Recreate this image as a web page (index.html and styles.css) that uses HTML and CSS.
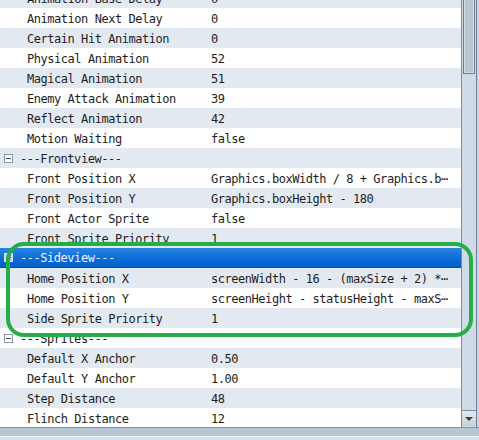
FILE: index.html
```html
<!DOCTYPE html>
<html lang="en">
<head>
  <meta charset="UTF-8" />
  <title>Plugin Parameters</title>
  <link rel="stylesheet" href="styles.css">
</head>
<body>

  <div class="panel">
    <div class="body-row">
      <div class="list">
        <div class="rows">
          <div class="row alt"><span class="name">Animation Base Delay</span><span class="value">0</span></div>
          <div class="row"><span class="name">Animation Next Delay</span><span class="value">0</span></div>
          <div class="row alt"><span class="name">Certain Hit Animation</span><span class="value">0</span></div>
          <div class="row"><span class="name">Physical Animation</span><span class="value">52</span></div>
          <div class="row alt"><span class="name">Magical Animation</span><span class="value">51</span></div>
          <div class="row"><span class="name">Enemy Attack Animation</span><span class="value">39</span></div>
          <div class="row alt"><span class="name">Reflect Animation</span><span class="value">42</span></div>
          <div class="row"><span class="name">Motion Waiting</span><span class="value">false</span></div>

          <div class="group alt"><span class="toggle"></span><span class="label">---Frontview---</span></div>
          <div class="row"><span class="name">Front Position X</span><span class="value">Graphics.boxWidth / 8 + Graphics.b⋯</span></div>
          <div class="row alt"><span class="name">Front Position Y</span><span class="value">Graphics.boxHeight - 180</span></div>
          <div class="row"><span class="name">Front Actor Sprite</span><span class="value">false</span></div>
          <div class="row alt"><span class="name">Front Sprite Priority</span><span class="value">1</span></div>

          <div class="group selected"><span class="toggle"></span><span class="label">---Sideview---</span></div>
          <div class="row alt"><span class="name">Home Position X</span><span class="value">screenWidth - 16 - (maxSize + 2) *⋯</span></div>
          <div class="row"><span class="name">Home Position Y</span><span class="value">screenHeight - statusHeight - maxS⋯</span></div>
          <div class="row alt"><span class="name">Side Sprite Priority</span><span class="value">1</span></div>

          <div class="group"><span class="toggle"></span><span class="label">---Sprites---</span></div>
          <div class="row alt"><span class="name">Default X Anchor</span><span class="value">0.50</span></div>
          <div class="row"><span class="name">Default Y Anchor</span><span class="value">1.00</span></div>
          <div class="row alt"><span class="name">Step Distance</span><span class="value">48</span></div>
          <div class="row"><span class="name">Flinch Distance</span><span class="value">12</span></div>
        </div>
      </div>

      <div class="vscroll">
        <div class="track">
          <div class="thumb"></div>
        </div>
        <div class="arrow-btn"><span class="arrow"></span></div>
      </div>
      <div class="edge"></div>
    </div>

    <div class="bottom"></div>
  </div>

  <div class="highlight"></div>

</body>
</html>
```

FILE: styles.css
```css
* { margin: 0; padding: 0; box-sizing: border-box; }
body {
  font-family: "DejaVu Sans Mono", "Liberation Mono", monospace;
  font-size: 12px;
  letter-spacing: -0.46px;
  color: #1e1e1e;
  background-color: #ffffff;
  width: 479px;
  height: 440px;
  overflow: hidden;
  position: relative;
}
.panel {
  display: flex;
  flex-direction: column;
  height: 440px;
}
.body-row {
  display: flex;
  height: 427px;
}
.list {
  flex: 1;
  overflow: hidden;
  background-color: #ffffff;
}
.rows {
  margin-top: -12px;
}
.row,
.group {
  height: 20px;
  line-height: 20px;
  padding-top: 1px;
  white-space: nowrap;
  overflow: hidden;
}
.row {
  display: grid;
  grid-template-columns: 211px 1fr;
}
.row .name {
  padding-left: 27px;
}
.row .value {
  overflow: hidden;
  padding-right: 4px;
}
.alt {
  background-color: #e3e9f1;
}
.group {
  display: flex;
  align-items: center;
  gap: 7px;
  padding-left: 4px;
  padding-top: 0;
}
.group .label {
  line-height: 20px;
  padding-top: 1px;
}
.toggle {
  width: 9px;
  height: 9px;
  border: 1px solid #8b98a6;
  background-color: #ffffff;
  position: relative;
}
.toggle::after {
  content: "";
  position: absolute;
  left: 1px;
  right: 1px;
  top: 3px;
  height: 1px;
  background-color: #404850;
}
.group.selected {
  background: linear-gradient(#2a86e4, #0a6ad6 60%, #0560c8);
  border-bottom: 1px solid #0a4f9e;
  color: #eef4ff;
}
.group.selected .toggle {
  border-color: #dfe9f6;
  background-color: #b9d3f1;
}
.vscroll {
  width: 16px;
  display: flex;
  flex-direction: column;
  background-color: #cfdbe7;
  border-left: 1px solid #7e8d9b;
  border-right: 1px solid #6f7f8f;
}
.track {
  flex: 1;
  position: relative;
  overflow: hidden;
}
.thumb {
  margin: -10px 1px 0 1px;
  height: 84px;
  background-color: #b9c6d2;
  border: 1px solid #6c7c8c;
  box-shadow: inset 0 0 0 1px #d3dde7;
}
.arrow-btn {
  height: 16px;
  margin: 0 0 1px 0;
  border-top: 1px solid #7e8d9b;
  background: linear-gradient(#e4e9ee, #c7d0d9);
  display: flex;
  justify-content: center;
  align-items: center;
}
.arrow {
  width: 0;
  height: 0;
  border-left: 4px solid transparent;
  border-right: 4px solid transparent;
  border-top: 4px solid #3a3f45;
}
.edge {
  width: 2px;
  background-color: #c6d6e6;
}
.bottom {
  flex: 1;
  border-top: 1px solid #8494a3;
  background: linear-gradient(#b7c6d5 0, #b7c6d5 8px, #f2f6fa 8px, #f2f6fa 9px, #d5e0ea 9px);
}
.highlight {
  position: absolute;
  left: 6px;
  top: 242px;
  width: 467px;
  height: 95px;
  border: 4px solid #25ad4b;
  border-radius: 18px;
}
```
